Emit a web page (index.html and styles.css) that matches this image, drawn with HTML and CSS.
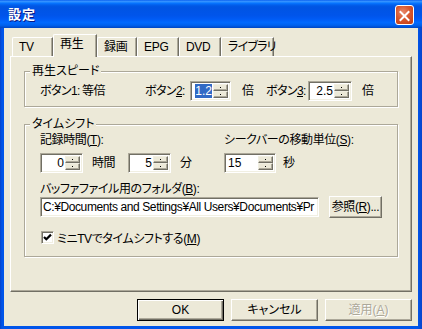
FILE: index.html
```html
<!DOCTYPE html>
<html lang="ja">
<head>
  <meta charset="UTF-8">
  <title>設定</title>
  <link rel="stylesheet" href="styles.css">
</head>
<body>

  <div class="window">

    <!-- Title bar -->
    <div class="titlebar">
      <span class="title">設定</span>
      <div class="close">
        <svg width="19" height="20" viewBox="0 0 19 20">
          <path d="M5 5.5 L14 14.5 M14 5.5 L5 14.5" stroke="#fff" stroke-width="2.2" stroke-linecap="square"/>
        </svg>
      </div>
    </div>

    <div class="client">

      <!-- Tabs -->
      <div class="tabs">
        <div class="tab w-tv">TV</div>
        <div class="tab active w-play">再生</div>
        <div class="tab w-rec">録画</div>
        <div class="tab w-epg">EPG</div>
        <div class="tab w-dvd">DVD</div>
        <div class="tab w-lib">ライブラリ</div>
      </div>

      <div class="panel">

        <!-- Playback speed -->
        <div class="group">
          <div class="group-title">再生スピード</div>
          <div class="speed-row">
            <span class="lbl w42">ボタン1:</span>
            <span class="lbl w63">等倍</span>
            <span class="lbl w45">ボタン<u>2</u>:</span>
            <div class="spin w41">
              <div class="val"><span class="sel">1.2</span></div>
              <div class="arrows"><div class="arr up"></div><div class="arr down"></div></div>
            </div>
            <span class="lbl unit1">倍</span>
            <span class="lbl w42">ボタン<u>3</u>:</span>
            <div class="spin w44">
              <div class="val">2.5</div>
              <div class="arrows"><div class="arr up"></div><div class="arr down"></div></div>
            </div>
            <span class="lbl unit2">倍</span>
          </div>
        </div>

        <!-- Time shift -->
        <div class="group shift">
          <div class="group-title">タイムシフト</div>
          <div class="shift-grid">
            <div class="col">
              <div class="field-label">記録時間(<u>T</u>):</div>
              <div class="spin-row">
                <div class="spin w43">
                  <div class="val">0</div>
                  <div class="arrows"><div class="arr up"></div><div class="arr down"></div></div>
                </div>
                <span class="lbl hours">時間</span>
                <div class="spin w43">
                  <div class="val">5</div>
                  <div class="arrows"><div class="arr up"></div><div class="arr down"></div></div>
                </div>
                <span class="lbl mins">分</span>
              </div>
            </div>
            <div class="col">
              <div class="field-label">シークバーの移動単位(<u>S</u>):</div>
              <div class="spin-row">
                <div class="spin w52">
                  <div class="val left">15</div>
                  <div class="arrows"><div class="arr up"></div><div class="arr down"></div></div>
                </div>
                <span class="lbl secs">秒</span>
              </div>
            </div>
          </div>

          <div class="folder-label">バッファファイル用のフォルダ(<u>B</u>):</div>
          <div class="folder-row">
            <div class="edit path">C:¥Documents and Settings¥All Users¥Documents¥Pr</div>
            <div class="btn browse">参照(<u>R</u>)...</div>
          </div>

          <div class="check-row">
            <div class="checkbox">
              <svg width="9" height="9" viewBox="0 0 9 9">
                <polyline points="1,4 3.3,6.3 8,1.6" fill="none" stroke="#000" stroke-width="2.2"/>
              </svg>
            </div>
            <span>ミニTVでタイムシフトする(<u>M</u>)</span>
          </div>
        </div>

      </div>

      <!-- Dialog buttons -->
      <div class="footer">
        <div class="btn default">OK</div>
        <div class="btn">キャンセル</div>
        <div class="btn disabled">適用(<u>A</u>)</div>
      </div>

    </div>
  </div>

</body>
</html>
```

FILE: styles.css
```css
body {
  margin: 0;
  font-family: "Liberation Sans", "Noto Sans CJK JP", sans-serif;
  font-size: 12px;
  font-feature-settings: "palt" 1;
  color: #000;
}
.window {
  width: 422px;
  height: 329px;
  box-sizing: border-box;
  background: linear-gradient(to right, #0842c8 0, #0055ea 2px, #0055ea 418px, #0843c9 422px);
  display: flex;
  flex-direction: column;
}
.titlebar {
  height: 28px;
  flex: none;
  display: flex;
  align-items: center;
  justify-content: space-between;
  padding: 0 8px 0 8px;
  background: linear-gradient(#0058ee 0%, #3a93ff 4%, #288eff 7%, #127dff 10%, #036ffc 13%, #0262ee 17%, #0057e5 22%, #0054e3 28%, #0055eb 56%, #005bf5 68%, #026afe 80%, #0062ef 90%, #0052d6 96%, #0046c0 100%);
}
.title {
  color: #fff;
  font-weight: bold;
  font-size: 13px;
  line-height: 16px;
  text-shadow: 1px 1px 0 #0a1883;
  letter-spacing: 1px;
  margin-top: 1px;
}
.close {
  width: 19px;
  height: 20px;
  margin-top: 2px;
  box-sizing: border-box;
  border: 1px solid #fff;
  border-radius: 3px;
  background: radial-gradient(circle at 40% 35%, #e98a6c 0%, #d8582f 45%, #c2390f 100%);
  display: flex;
}
.client {
  flex: 1;
  margin: 0 4px 3px 4px;
  background: #ece9d8;
  padding: 6px 6px 5px 6px;
  display: flex;
  flex-direction: column;
}

/* tabs */
.tabs {
  display: flex;
  height: 23px;
  margin: 0 0 -1px 2px;
  position: relative;
  z-index: 1;
}
.tab {
  box-sizing: border-box;
  margin-top: 3px;
  height: 19px;
  padding: 2px 0 0 6px;
  line-height: 14px;
  white-space: nowrap;
  letter-spacing: -0.3px;
  background: #ece9d8;
  border-top: 1px solid #fff;
  border-left: 1px solid #fff;
  border-right: 1px solid #716f64;
  border-radius: 2px 0 0 0;
  box-shadow: inset -1px 0 0 #aca899;
}
.tab.active {
  margin-top: 0;
  height: 23px;
  padding-top: 2px;
}
.w-tv { width: 41px; }
.w-play { width: 44px; }
.w-rec { width: 40px; }
.w-epg { width: 42px; }
.w-dvd { width: 42px; }
.w-lib { width: 53px; letter-spacing: -0.8px; }

.panel {
  height: 236px;
  box-sizing: border-box;
  border-top: 1px solid #fff;
  border-left: 1px solid #fff;
  border-right: 1px solid #716f64;
  border-bottom: 1px solid #716f64;
  box-shadow: inset -1px -1px 0 #aca899;
  padding: 14px 13px 0 13px;
}

/* group boxes */
.group {
  border: 1px solid #aca899;
  box-shadow: inset 1px 1px 0 #fff, 1px 1px 0 #fff;
  padding: 0 15px 5px 15px;
}
.group-title {
  width: fit-content;
  margin: -7px 0 0 -10px;
  padding: 0 2px;
  height: 13px;
  line-height: 13px;
  background: #ece9d8;
}
.shift {
  margin-top: 17px;
  padding-bottom: 10px;
}
.speed-row {
  display: flex;
  align-items: center;
  height: 20px;
  margin-top: 3px;
}
.lbl {
  line-height: 14px;
  white-space: nowrap;
  letter-spacing: -0.6px;
}
.w42 { width: 42px; }
.w63 { width: 63px; }
.w45 { width: 45px; }
.unit1 { width: 24px; margin-left: 11px; }
.unit2 { margin-left: 10px; }

/* spin boxes */
.spin {
  display: flex;
  height: 20px;
  box-sizing: border-box;
  border: 1px solid;
  border-color: #aca899 #fff #fff #aca899;
  box-shadow: inset 1px 1px 0 #716f64, inset -1px -1px 0 #f1efe2;
  background: #fff;
  padding: 2px 2px 2px 2px;
}
.w41 { width: 41px; }
.w43 { width: 43px; }
.w44 { width: 44px; }
.w52 { width: 52px; }
.val {
  flex: 1;
  text-align: right;
  line-height: 14px;
  padding-right: 1px;
}
.val.left {
  text-align: left;
  padding-left: 1px;
}
.sel {
  background: #316ac5;
  color: #fff;
}
.arrows {
  width: 15px;
  display: flex;
  flex-direction: column;
}
.arr {
  flex: 1;
  background: #ece9d8;
  border-top: 1px solid #f1efe2;
  border-left: 1px solid #f1efe2;
  border-right: 1px solid #716f64;
  border-bottom: 1px solid #716f64;
  box-shadow: inset -1px -1px 0 #aca899;
  display: flex;
  align-items: center;
  justify-content: center;
}
.arr::after {
  content: "";
  width: 1px;
  height: 1px;
  background: #000;
}

/* time shift */
.shift-grid {
  display: grid;
  grid-template-columns: 184px 1fr;
  margin-top: 2px;
}
.field-label {
  line-height: 14px;
  white-space: nowrap;
  letter-spacing: -0.4px;
}
.spin-row {
  display: flex;
  align-items: center;
  margin-top: 6px;
}
.hours { width: 36px; margin-left: 9px; }
.mins { margin-left: 9px; }
.secs { margin-left: 7px; }
.folder-label {
  margin-top: 10px;
  line-height: 13px;
  letter-spacing: -0.4px;
}
.folder-row {
  display: flex;
  align-items: center;
  height: 22px;
}
.edit {
  height: 20px;
  box-sizing: border-box;
  border: 1px solid;
  border-color: #aca899 #fff #fff #aca899;
  box-shadow: inset 1px 1px 0 #716f64, inset -1px -1px 0 #f1efe2;
  background: #fff;
  padding: 2px 2px 0 2px;
  line-height: 15px;
  white-space: nowrap;
  overflow: hidden;
}
.path {
  width: 279px;
  letter-spacing: -0.4px;
}
.browse {
  width: 53px;
  height: 22px;
  margin-left: 10px;
  letter-spacing: -0.4px;
}
.check-row {
  display: flex;
  align-items: center;
  height: 17px;
  margin-top: 11px;
  padding-left: 1px;
  letter-spacing: -0.4px;
}
.checkbox {
  width: 13px;
  height: 13px;
  box-sizing: border-box;
  border: 1px solid;
  border-color: #aca899 #fff #fff #aca899;
  box-shadow: inset 1px 1px 0 #716f64, inset -1px -1px 0 #f1efe2;
  background: #fff;
  padding: 1px 0 0 1px;
  margin-right: 3px;
  display: flex;
}

/* buttons */
.btn {
  box-sizing: border-box;
  display: flex;
  align-items: center;
  justify-content: center;
  white-space: nowrap;
  background: #ece9d8;
  border-top: 1px solid #fff;
  border-left: 1px solid #fff;
  border-right: 1px solid #716f64;
  border-bottom: 1px solid #716f64;
  box-shadow: inset -1px -1px 0 #aca899;
  line-height: 14px;
}
.footer {
  display: flex;
  justify-content: flex-end;
  gap: 7px;
  margin-top: 7px;
}
.footer .btn {
  width: 87px;
  height: 22px;
}
.btn.default {
  border: 1px solid #000;
  box-shadow: inset 1px 1px 0 #fff, inset -1px -1px 0 #716f64, inset -2px -2px 0 #aca899;
}
.btn.disabled {
  color: #aca899;
  text-shadow: 1px 1px 0 #fff;
}
```
